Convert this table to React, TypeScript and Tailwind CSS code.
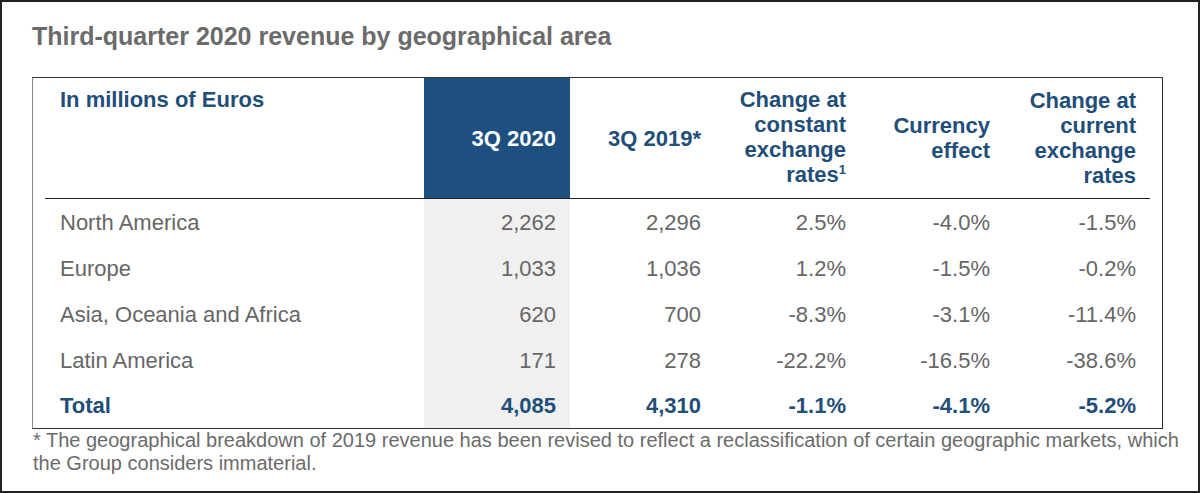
export default function App() {
  const rows = [
    { name: 'North America', q20: '2,262', q19: '2,296', cc: '2.5%', fx: '-4.0%', cur: '-1.5%' },
    { name: 'Europe', q20: '1,033', q19: '1,036', cc: '1.2%', fx: '-1.5%', cur: '-0.2%' },
    { name: 'Asia, Oceania and Africa', q20: '620', q19: '700', cc: '-8.3%', fx: '-3.1%', cur: '-11.4%' },
    { name: 'Latin America', q20: '171', q19: '278', cc: '-22.2%', fx: '-16.5%', cur: '-38.6%' },
  ]

  const cols = 'grid grid-cols-[379px_146px_145px_145px_145px_145px]'

  return (
    <div
      className="w-[1200px] h-[493px] bg-white border-2 border-[#222] overflow-hidden"
      style={{ fontFamily: '"Liberation Sans", Arial, sans-serif' }}
    >
      {/* Title */}
      <h1 className="pl-[30px] pt-[19px] text-[25px] leading-[30px] font-bold text-[#6b6b6b]">
        Third-quarter 2020 revenue by geographical area
      </h1>

      {/* Table */}
      <div className="ml-[30px] mt-[26px] w-[1131px] border border-[#333] border-l-[#8a8a8a] px-[12px]">
        {/* Header */}
        <div className={`${cols} h-[121px] border-b border-[#222] text-[22px] leading-[25px] font-bold text-[#1f4e79]`}>
          <div className="pl-[15px] pt-[9px]">In millions of Euros</div>
          <div className="bg-[#1d4f80] text-white flex items-center justify-end pr-[14px]">3Q 2020</div>
          <div className="flex items-center justify-end pr-[14px]">3Q 2019*</div>
          <div className="flex items-center justify-end text-right pr-[14px]">
            <div>
              Change at
              <br />
              constant
              <br />
              exchange
              <br />
              rates<span className="relative -top-[8px] text-[13px]">1</span>
            </div>
          </div>
          <div className="flex items-center justify-end text-right pr-[15px]">
            <div>
              Currency
              <br />
              effect
            </div>
          </div>
          <div className="flex items-center justify-end text-right pr-[14px]">
            <div>
              Change at
              <br />
              current
              <br />
              exchange
              <br />
              rates
            </div>
          </div>
        </div>

        {/* Body */}
        {rows.map((r) => (
          <div key={r.name} className={`${cols} h-[46px] text-[22px] leading-[25px] text-[#666]`}>
            <div className="pl-[15px] flex items-center">{r.name}</div>
            <div className="bg-[#f0f0f0] flex items-center justify-end pr-[14px]">{r.q20}</div>
            <div className="flex items-center justify-end pr-[14px]">{r.q19}</div>
            <div className="flex items-center justify-end pr-[14px]">{r.cc}</div>
            <div className="flex items-center justify-end pr-[15px]">{r.fx}</div>
            <div className="flex items-center justify-end pr-[14px]">{r.cur}</div>
          </div>
        ))}
        <div className={`${cols} h-[45px] text-[22px] leading-[25px] font-bold text-[#1f4e79]`}>
          <div className="pl-[15px] flex items-center">Total</div>
          <div className="bg-[#f0f0f0] flex items-center justify-end pr-[14px]">4,085</div>
          <div className="flex items-center justify-end pr-[14px]">4,310</div>
          <div className="flex items-center justify-end pr-[14px]">-1.1%</div>
          <div className="flex items-center justify-end pr-[15px]">-4.1%</div>
          <div className="flex items-center justify-end pr-[14px]">-5.2%</div>
        </div>
      </div>

      {/* Footnote */}
      <p className="pl-[31px] text-[20px] leading-[23px] text-[#6b6b6b]">
        * The geographical breakdown of 2019 revenue has been revised to reflect a reclassification of certain geographic markets, which
        <br />
        the Group considers immaterial.
      </p>
    </div>
  )
}
